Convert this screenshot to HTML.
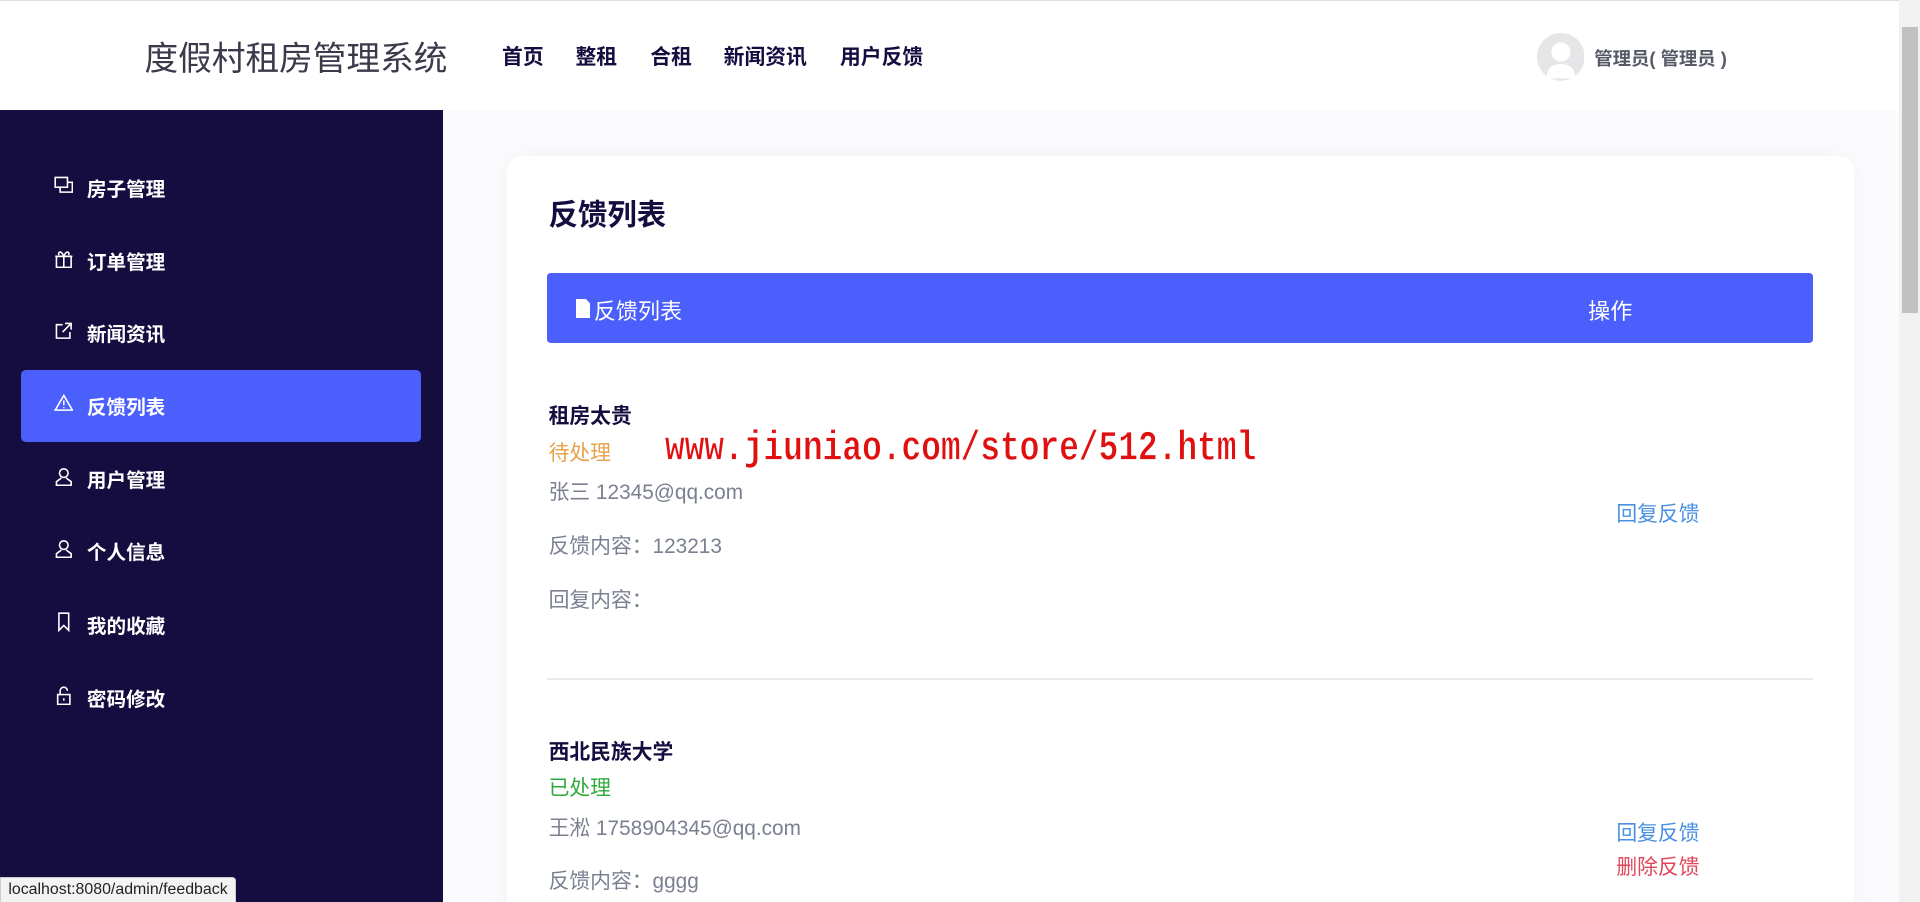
<!DOCTYPE html>
<html><head><meta charset="utf-8"><style>
html,body{margin:0;padding:0;overflow:hidden;background:#fbfbfd}
body{width:1568px;height:737px;zoom:1.22449;position:relative;font-family:"Liberation Sans","Noto Sans CJK SC",sans-serif}
.a{position:absolute;white-space:nowrap}
.hdr{left:0;top:0;width:1551px;height:90px;background:#fff;border-top:1px solid #ddd;box-sizing:border-box}
.nav{font-size:17px;font-weight:bold;color:#150d3f;top:33px}
.side{left:0;top:90px;width:362px;height:647px;background:#150d3f}
.mi{left:44px;color:#fff;font-size:16px;font-weight:bold}
.mi svg{position:absolute;left:0;top:2px}
.mi span{position:absolute;left:27px;top:0}
.card{left:414px;top:127px;width:1100px;height:640px;background:#fff;border-radius:12px;box-shadow:0 0 20px rgba(0,0,40,.04)}
.g{color:#7a8090;font-size:17px}
.lk{font-size:17px;color:#4a90e2;left:1320px}
</style></head><body>
<div class="a hdr"></div>
<div class="a" style="left:118px;top:25px;font-size:27.5px;color:#3a3a4a">度假村租房管理系统</div>
<div class="a nav" style="left:410px">首页</div>
<div class="a nav" style="left:470px">整租</div>
<div class="a nav" style="left:531px">合租</div>
<div class="a nav" style="left:591px">新闻资讯</div>
<div class="a nav" style="left:686px">用户反馈</div>
<svg class="a" style="left:1255px;top:27px" width="39" height="39" viewBox="0 0 40 40"><circle cx="20" cy="20" r="20" fill="#e6e6e8"/><circle cx="20" cy="16" r="8" fill="#fff"/><path d="M8 38 Q8 26 20 26 Q32 26 32 38Z" fill="#fff"/></svg>
<div class="a" style="left:1302px;top:37px;font-size:15px;font-weight:bold;color:#555a66">管理员( 管理员 )</div>
<div class="a" style="left:1551px;top:0;width:17px;height:737px;background:#f1f1f1"></div>
<div class="a" style="left:1553px;top:22px;width:13px;height:234px;background:#c1c1c1"></div>
<div class="a side"></div>
<div class="a" style="left:17px;top:302px;width:327px;height:59px;background:#4a5ffb;border-radius:4px"></div>
<div class="a mi" style="top:141px"><svg width="16" height="16" viewBox="0 0 16 16" fill="none" stroke="#fff" stroke-width="1.3"><rect x="1" y="2" width="10" height="8"/><path d="M5 10v4h10V6h-4"/></svg><span>房子管理</span></div>
<div class="a mi" style="top:201px"><svg width="16" height="16" viewBox="0 0 16 16" fill="none" stroke="#fff" stroke-width="1.3"><rect x="2" y="6" width="12" height="9"/><path d="M1 6h14M8 6v9M8 6C6 1 3 2 4 5M8 6c2-5 5-4 4-1"/></svg><span>订单管理</span></div>
<div class="a mi" style="top:260px"><svg width="16" height="16" viewBox="0 0 16 16" fill="none" stroke="#fff" stroke-width="1.3"><path d="M7 3H2v11h11V9M9 2h5v5M14 2L7 9"/></svg><span>新闻资讯</span></div>
<div class="a mi" style="top:319px"><svg width="16" height="16" viewBox="0 0 16 16" fill="none" stroke="#fff" stroke-width="1.3"><path d="M8 2L15 14H1Z M8 6v4 M8 11.5v1"/></svg><span>反馈列表</span></div>
<div class="a mi" style="top:379px"><svg width="16" height="16" viewBox="0 0 16 16" fill="none" stroke="#fff" stroke-width="1.3"><circle cx="8" cy="5" r="3.5"/><path d="M6 9L2 12v3h12v-3l-4-3"/></svg><span>用户管理</span></div>
<div class="a mi" style="top:438px"><svg width="16" height="16" viewBox="0 0 16 16" fill="none" stroke="#fff" stroke-width="1.3"><circle cx="8" cy="5" r="3.5"/><path d="M6 9L2 12v3h12v-3l-4-3"/></svg><span>个人信息</span></div>
<div class="a mi" style="top:498px"><svg width="16" height="16" viewBox="0 0 16 16" fill="none" stroke="#fff" stroke-width="1.3"><path d="M4 1h8v14l-4-4-4 4Z"/></svg><span>我的收藏</span></div>
<div class="a mi" style="top:558px"><svg width="16" height="16" viewBox="0 0 16 16" fill="none" stroke="#fff" stroke-width="1.3"><rect x="3" y="7" width="10" height="8"/><path d="M5 7V4a3 3 0 0 1 6 0M8 10v2"/></svg><span>密码修改</span></div>
<div class="a card"></div>
<div class="a" style="left:448px;top:157px;font-size:24px;font-weight:bold;color:#150d3f">反馈列表</div>
<div class="a" style="left:447px;top:223px;width:1034px;height:57px;background:#4a5ffb;border-radius:3px"></div>
<svg class="a" style="left:470px;top:244px" width="12" height="16" viewBox="0 0 12 16"><path d="M0 0h8l4 4v12H0Z" fill="#fff"/></svg>
<div class="a" style="left:485px;top:240px;font-size:18px;color:#fff">反馈列表</div>
<div class="a" style="left:1297px;top:240px;font-size:18px;color:#fff">操作</div>
<div class="a" style="left:448px;top:326px;font-size:17px;font-weight:bold;color:#150d3f">租房太贵</div>
<div class="a" style="left:448px;top:356px;font-size:17px;color:#e8a04a">待处理</div>
<div class="a g" style="left:448px;top:388px">张三 12345@qq.com</div>
<div class="a g" style="left:448px;top:432px">反馈内容：123213</div>
<div class="a g" style="left:448px;top:476px">回复内容：</div>
<div class="a lk" style="top:406px">回复反馈</div>
<div class="a" style="left:447px;top:554px;width:1034px;height:1px;background:#e8e8ee"></div>
<div class="a" style="left:448px;top:600px;font-size:17px;font-weight:bold;color:#150d3f">西北民族大学</div>
<div class="a" style="left:448px;top:630px;font-size:17px;color:#2eaa3a">已处理</div>
<div class="a g" style="left:448px;top:662px">王淞 1758904345@qq.com</div>
<div class="a g" style="left:448px;top:706px">反馈内容：gggg</div>
<div class="a lk" style="top:666px">回复反馈</div>
<div class="a lk" style="top:694px;color:#e0455a">删除反馈</div>
<div class="a" style="left:543px;top:350px;font-size:27px;font-weight:bold;font-family:'Liberation Mono',monospace;color:#e01010;-webkit-text-stroke:0.5px #fff;transform:scaleY(1.25);transform-origin:0 50%;letter-spacing:-0.1px">www.jiuniao.com/store/512.html</div>
<div class="a" style="left:0;top:716px;height:21px;padding:0 6px;background:#f3f3f3;border:1px solid #ccc;border-radius:0 3px 0 0;font-size:13px;line-height:20px;color:#222">localhost:8080/admin/feedback</div>
</body></html>
